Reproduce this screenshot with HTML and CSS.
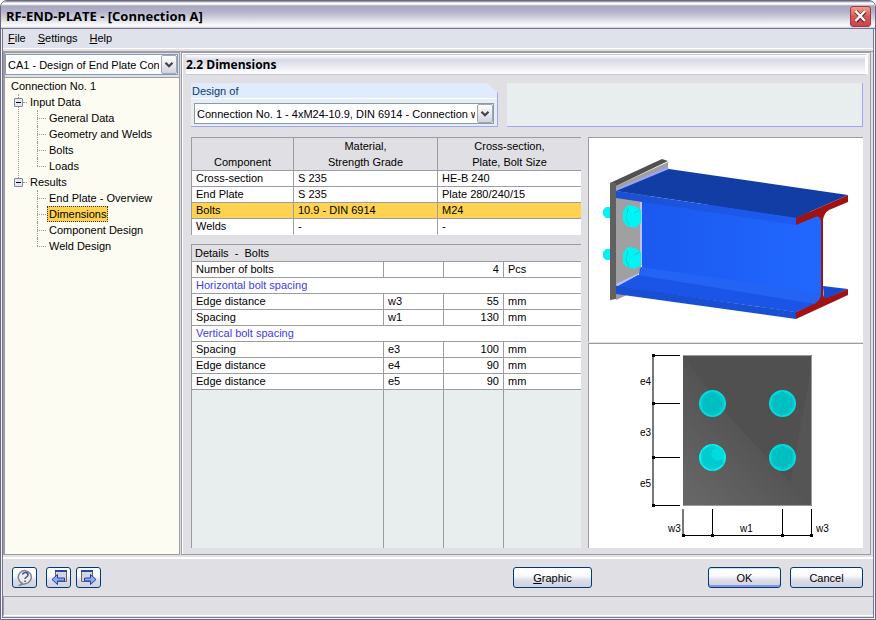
FILE: index.html
```html
<!DOCTYPE html>
<html lang="en">
<head>
<meta charset="utf-8">
<title>RF-END-PLATE - [Connection A]</title>
<link rel="stylesheet" href="styles.css">
</head>
<body>
<div class="window">
  <header class="titlebar">
    <h1>RF-END-PLATE - [Connection A]</h1>
    <button class="close" aria-label="Close" type="button">
      <svg viewBox="0 0 21 21" width="21" height="21" aria-hidden="true"><path d="M6 5.500L15 15.500M15 5.500L6 15.500" stroke="#6e1a24" stroke-width="4"/><path d="M5.500 5L15 15M15 5L5.500 15" stroke="#fff" stroke-width="2.500"/></svg>
    </button>
  </header>
  <nav class="menubar" aria-label="Menu">
    <button type="button"><u>F</u>ile</button>
    <button type="button"><u>S</u>ettings</button>
    <button type="button"><u>H</u>elp</button>
  </nav>
  <div class="workspace">
    <aside class="sidebar">
      <div class="case">
        <select class="combo" aria-label="Design case"><option>CA1 - Design of End Plate Connection</option></select>
        <svg class="arrow" viewBox="0 0 16 18" aria-hidden="true"><use href="#chevron"/></svg>
      </div>
      <div class="tree">
        <div class="root">Connection No. 1</div>
        <ul class="groups">
          <li class="group"><div class="branch"><button type="button" class="toggle" aria-label="Collapse Input Data"></button>Input Data</div>
            <ul class="leaves"><li><a href="#general">General Data</a></li><li><a href="#geometry">Geometry and Welds</a></li><li><a href="#bolts">Bolts</a></li><li><a href="#loads">Loads</a></li></ul>
          </li>
          <li class="group"><div class="branch"><button type="button" class="toggle" aria-label="Collapse Results"></button>Results</div>
            <ul class="leaves"><li><a href="#overview">End Plate - Overview</a></li><li><a class="current" href="#dimensions">Dimensions</a></li><li><a href="#component">Component Design</a></li><li><a href="#weld">Weld Design</a></li></ul>
          </li>
        </ul>
      </div>
    </aside>
    <main class="content">
      <h2>2.2 Dimensions</h2>
      <div class="panels">
        <section class="design">
          <label for="design">Design of</label>
          <div class="design-field">
            <select id="design" class="combo"><option>Connection No. 1 - 4xM24-10.9, DIN 6914 - Connection with end plate</option></select>
            <svg class="arrow" viewBox="0 0 16 18" aria-hidden="true"><use href="#chevron"/></svg>
          </div>
        </section>
        <div class="blank"></div>
      </div>
      <div class="columns">
        <div class="tables">
          <table class="components">
            <colgroup><col class="c-name"><col class="c-material"><col></colgroup>
            <thead><tr><th>Component</th><th>Material,<br>Strength Grade</th><th>Cross-section,<br>Plate, Bolt Size</th></tr></thead>
            <tbody>
              <tr><td>Cross-section</td><td>S 235</td><td>HE-B 240</td></tr>
              <tr><td>End Plate</td><td>S 235</td><td>Plate 280/240/15</td></tr>
              <tr class="selected"><td>Bolts</td><td>10.9 - DIN 6914</td><td>M24</td></tr>
              <tr><td>Welds</td><td>-</td><td>-</td></tr>
            </tbody>
          </table>
          <div class="details-box">
            <table class="details">
              <colgroup><col><col class="d-symbol"><col class="d-value"><col class="d-unit"></colgroup>
              <thead><tr><th colspan="4">Details&nbsp; -&nbsp; Bolts</th></tr></thead>
              <tbody>
                <tr><td>Number of bolts</td><td></td><td class="num">4</td><td>Pcs</td></tr>
                <tr class="heading"><td colspan="4">Horizontal bolt spacing</td></tr>
                <tr><td>Edge distance</td><td>w3</td><td class="num">55</td><td>mm</td></tr>
                <tr><td>Spacing</td><td>w1</td><td class="num">130</td><td>mm</td></tr>
                <tr class="heading"><td colspan="4">Vertical bolt spacing</td></tr>
                <tr><td>Spacing</td><td>e3</td><td class="num">100</td><td>mm</td></tr>
                <tr><td>Edge distance</td><td>e4</td><td class="num">90</td><td>mm</td></tr>
                <tr><td>Edge distance</td><td>e5</td><td class="num">90</td><td>mm</td></tr>
              </tbody>
            </table>
            <div class="filler"><i></i><i></i><i></i><i></i></div>
          </div>
        </div>
        <div class="views">
          <figure class="view">
            <svg viewBox="589 138 274 204" role="img" aria-label="Beam with bolted end plate">
              <defs>
                <linearGradient id="web" x1="0" x2="1"><stop offset="0" stop-color="#1b58ef"/><stop offset="1" stop-color="#2168ff"/></linearGradient>
                <linearGradient id="flange" x1="0" x2="1"><stop offset="0" stop-color="#1b4fd2"/><stop offset="1" stop-color="#1d5cf2"/></linearGradient>
              </defs>
              <path d="M616 186L668 162V180L641 204V268L637 277L616 287Z" fill="#a0a0a0"/>
              <path d="M616 292L629 294L616 300Z" fill="#999"/>
              <path d="M610 183L662 159L668 161L616 186Z" fill="#505050"/>
              <path d="M616 189L667 167L670 170L617 193Z" fill="#98a4f4"/>
              <path d="M616 284L637 274L640 276L618 287Z" fill="#bbc1ff"/>
              <path d="M642 200L822 213V298L796 312L637 286L640 268H642Z" fill="url(#web)"/>
              <path d="M640 202H642V265H640Z" fill="#bbc1ff"/>
              <path d="M641 267L822 293L821 302L807 306L638 279Z" fill="#2464f5"/>
              <path d="M638 275L816 304L796 312L616 287Z" fill="#1b55e8"/>
              <path d="M616 286L796 312V319L616 294Z" fill="#194fd2"/>
              <path d="M823 286L848 289L824 300Z" fill="#174bcf"/>
              <path d="M616 191L669 169L848 195L796 218Z" fill="#123da5"/>
              <path d="M616 191L796 218V225L616 198Z" fill="url(#flange)"/>
              <path d="M796 218L848 195V202L829 210Q824 213 823 220V292Q823 299 827 298L848 289V295L796 319V312L814 304Q820 301 821 295V223Q821 215 815 217L796 225Z" fill="#a01313"/>
              <path d="M610 183H616V299L610 300Z" fill="#606060"/>
              <path d="M603 210L606 207H610V218H606L603 215ZM603 252L606 249H610V260H606L603 257ZM623 211L628 205L635 206L641 210V223L635 228L627 226L623 221ZM623 253L628 247L635 248L641 252V265L635 269L627 267L623 263Z" fill="#00f4f4"/>
              <path d="M628 209L626 218L629 225M628 251L626 260L629 267M634 213L640 210M634 255L640 252" fill="none" stroke="#00d2d5"/>
            </svg>
          </figure>
          <figure class="view">
            <svg viewBox="589 344 274 204" role="img" aria-label="End plate dimensions">
              <defs><linearGradient id="plate" x1=".6" y1=".5" x2=".15" y2="1"><stop offset="0" stop-color="#525252"/><stop offset="1" stop-color="#666"/></linearGradient></defs>
              <path d="M683 355H812V506H683Z" fill="url(#plate)"/>
              <path d="M683 355H812V506L726 413Z" fill="#505050"/>
              <path d="M812 365V506L790 484Z" fill="#555"/>
              <path d="M683 355.500H811.500V505.500H683" fill="none" stroke="#999"/>
              <g fill="#00bfc2" stroke="#00dfe0" stroke-width="2"><circle cx="712.500" cy="403.500" r="12.500"/><circle cx="782.500" cy="403.500" r="12.500"/><circle cx="712.500" cy="457.500" r="12.500" fill="#00ccd0" stroke="#00f6f6"/><circle cx="782.500" cy="457.500" r="12.500"/></g>
              <path id="hex" d="M712 391L723 397V410L712 416L702 410V397Z" fill="none" stroke="#00cfd2"/>
              <use href="#hex" x="70"/><use href="#hex" y="54"/><use href="#hex" x="70" y="54"/>
              <path d="M712 450L718 446L724 452V459L717 461L712 457Z" fill="#00dde0"/>
              <path d="M653 355V506M683 509V535" stroke="#777" stroke-width="2" fill="none"/>
              <path d="M652 355.500H680M652 403.500H680M652 457.500H680M652 505.500H680M712.500 509V536M782.500 509V536M811.500 509V536M683 535.500H812" stroke="#000" fill="none"/>
              <path d="M652 354h3v3h-3zM652 402h3v3h-3zM652 456h3v3h-3zM652 504h3v3h-3zM682 534h3v3h-3zM711 534h3v3h-3zM781 534h3v3h-3zM810 534h3v3h-3z"/>
              <g class="dim"><text x="640" y="385">e4</text><text x="640" y="436">e3</text><text x="640" y="487">e5</text><text x="668" y="532">w3</text><text x="740" y="532">w1</text><text x="816" y="532">w3</text></g>
            </svg>
          </figure>
        </div>
      </div>
    </main>
  </div>
  <footer class="actions">
    <button type="button" class="btn icon help" aria-label="Help"><svg viewBox="0 0 20 17" width="20" height="17" aria-hidden="true"><path d="M7 14L5 16L11 14.500A6.500 6.500 0 1 0 7 14Z" fill="#ececf0" stroke="#85868e" stroke-width="1.500"/><path d="M7.500 5.500Q8 3.500 10.500 3.500T13 6Q13 7 11.500 8T10 10M10 11.500V13" fill="none" stroke="#3a5080" stroke-width="1.500"/></svg></button>
    <button type="button" class="btn icon" aria-label="Previous"><svg viewBox="0 0 20 17" width="20" height="17" aria-hidden="true"><path d="M6.500 1.500H17.500V12.500H6.500Z" fill="#d5d5dd" stroke="#666"/><path d="M6 1H18V3H6Z" fill="#2845b5"/><path d="M3 10.500L8.500 5.500V9H15.500V12H8.500V15.500Z" fill="#8fa7f5" stroke="#213fae"/></svg></button>
    <button type="button" class="btn icon" aria-label="Next"><svg viewBox="0 0 20 17" width="20" height="17" aria-hidden="true"><path d="M2.500 1.500H13.500V12.500H2.500Z" fill="#d5d5dd" stroke="#666"/><path d="M2 1H14V3H2Z" fill="#2845b5"/><path d="M17 10.500L11.500 5.500V9H5.500V12H11.500V15.500Z" fill="#8fa7f5" stroke="#213fae"/></svg></button>
    <button type="button" class="btn graphic"><u>G</u>raphic</button>
    <button type="button" class="btn ok">OK</button>
    <button type="button" class="btn">Cancel</button>
  </footer>
  <div class="status"></div>
</div>
<svg class="symbols" aria-hidden="true"><symbol id="chevron" viewBox="0 0 16 18"><path d="M4 7L8 11L12 7" fill="none" stroke="#444" stroke-width="2.500"/></symbol></svg>
</body>
</html>
```
FILE: styles.css
```css
* { box-sizing: border-box; }
body {
  margin: 0;
  background: #fff;
  color: #000;
  font: 11px/16px "Liberation Sans", Arial, sans-serif;
}
button, select { font: inherit; color: inherit; }
ul { list-style: none; margin: 0; padding: 0; }
a { color: inherit; text-decoration: none; }
.symbols { display: none; }

.window {
  height: 100vh;
  display: flex;
  flex-direction: column;
  background: #e0dfe3;
  border: 1px solid #686680;
  border-radius: 7px 7px 0 0;
  box-shadow: inset 0 0 0 1px #f4f4f8, inset 0 0 0 2px #77758f;
  padding: 0 2px 3px;
  overflow: hidden;
}
.titlebar {
  display: flex;
  align-items: center;
  height: 28px;
  margin: 0 -2px;
  padding: 3px 4px 0 5px;
  border-bottom: 1px solid #77758f;
  background: linear-gradient(#77758f 0, #fff 2px, #fff 3px, #a6a5bf 5px, #b5b4ca 11px, #d2d2df 17px, #fff 25px, #c8c8d4 27px);
}
.titlebar h1 {
  flex: 1;
  margin: 0;
  font: bold 13px/20px "Open Sans", sans-serif;
}
.close {
  width: 21px;
  height: 21px;
  padding: 0;
  border: 1px solid #a3364a;
  border-radius: 3px;
  background: linear-gradient(#eda08f, #d75a52 50%, #c9444c);
}
.close svg { display: block; margin: -1px; }
.menubar {
  display: flex;
  gap: 12px;
  height: 20px;
  padding: 1px 5px 3px;
  background: #dfe2eb;
  border-bottom: 1px solid #fff;
}
.menubar button { border: 0; padding: 0; background: none; }

.workspace {
  flex: 1;
  min-height: 0;
  display: flex;
  gap: 1px;
  margin-top: 2px;
  padding-right: 2px;
  border-top: 1px solid #9d9ca4;
  border-bottom: 2px solid #fff;
}
.sidebar {
  width: 177px;
  display: flex;
  flex-direction: column;
  border: 1px solid #9d9ca4;
  border-width: 1px 1px 1px 2px;
  margin-bottom: 2px;
  background: #fcfcf3;
}
.case { position: relative; background: #e0dfe3; padding: 1px 1px 2px 0; border-bottom: 1px solid #9d9ca4; }
.combo {
  appearance: none;
  display: block;
  width: 100%;
  height: 21px;
  padding: 0 18px 0 2px;
  border: 1px solid #7f9db9;
  border-radius: 0;
  background: #fff;
  text-overflow: clip;
}
.arrow {
  position: absolute;
  right: 2px;
  top: 2px;
  width: 16px;
  height: 19px;
  border: 1px solid #a6a5b5;
  border-radius: 2px;
  background: linear-gradient(#fff, #d3d3df);
  pointer-events: none;
}
.tree { padding-left: 6px; }
.groups { padding-left: 1px; }
.group { position: relative; }
.group:first-child::before {
  content: "";
  position: absolute;
  left: 6px;
  top: 0;
  height: 88px;
  border-left: 1px dotted #9a9a9a;
}
.branch { display: flex; align-items: center; }
.toggle {
  position: relative;
  width: 9px;
  height: 9px;
  margin: 0 7px 0 2px;
  padding: 0;
  border: 1px solid #7b8b9c;
  border-radius: 1px;
  background: linear-gradient(#000, #000) center / 5px 1px no-repeat, #e7e7ec;
}
.toggle::after { content: ""; position: absolute; left: 8px; top: 3px; width: 4px; border-top: 1px dotted #9a9a9a; }
.leaves { margin-left: 25px; }
.leaves li { position: relative; padding-left: 10px; height: 16px; }
.leaves li::before, .leaves li::after { content: ""; position: absolute; left: 0; top: 0; }
.leaves li::before { height: 16px; border-left: 1px dotted #9a9a9a; }
.leaves li:last-child::before { height: 8px; }
.leaves li::after { top: 8px; width: 9px; border-top: 1px dotted #9a9a9a; }
.leaves a { display: inline-block; padding: 0 2px; }
.current { background: #ffd34f; outline: 1px dotted #333; outline-offset: -1px; }

.content {
  flex: 1;
  min-width: 0;
  display: flex;
  flex-direction: column;
  border: 1px solid #9d9ca4;
  box-shadow: inset 1px 1px #fff;
  padding: 1px 2px 6px;
  margin-bottom: 2px;
}
.content h2 {
  margin: 0 0 8px 2px;
  height: 21px;
  font: bold 12px/19px "Open Sans", sans-serif;
  border: 1px solid #c5c5d8;
  border-width: 1px 3px 1px 0;
  border-right-color: #fff;
  background: linear-gradient(#fff, #d8d8e5 5px, #fff);
}
.panels { display: flex; gap: 9px; padding: 0 5px 0 7px; }
.design { width: 307px; background: #e8eeed; border: 1px solid #a5a3f3; border-width: 0 1px 1px 0; clip-path: polygon(0 0, 296px 0, 100% 10px, 100% 100%, 0 100%); }
.design label { display: block; height: 16px; padding-left: 1px; background: #e0ebfd; color: #063d78; border-bottom: 1px solid #fff; }
.design-field { position: relative; padding: 4px 3px 2px; }
.design-field .arrow { right: 4px; top: 5px; }
.blank { flex: 1; background: #e8eeed; border: 1px solid #a5a3f3; border-width: 0 1px 1px 0; }

.columns { flex: 1; min-height: 0; display: flex; gap: 7px; padding: 10px 5px 0 7px; }
.tables { width: 390px; display: flex; flex-direction: column; gap: 9px; }
table { width: 100%; border-collapse: separate; border-spacing: 0; table-layout: fixed; border: 1px solid #9d9ca4; border-width: 1px 0 0 1px; }
th { font-weight: normal; border-bottom: 1px solid #9d9ca4; padding: 0; vertical-align: bottom; }
td { height: 16px; line-height: 15px; padding: 0 4px; background: #fff; border-bottom: 1px solid #9d9ca4; }
.components tr > * + * { border-left: 1px solid #9d9ca4; }
.components tr:last-child td { border-bottom-color: #fff; }
.c-name { width: 101px; }
.c-material { width: 144px; }
.selected td { background: #ffd34f; }
.details-box { flex: 1; min-height: 0; display: flex; flex-direction: column; background: #e8eeed; }
.details th { height: 17px; line-height: 16px; padding-left: 3px; text-align: left; background: #e0dfe3; }
.details td + td { border-left: 1px solid #9d9ca4; }
.heading td { color: #3c3cf0; }
.d-symbol, .d-value { width: 60px; }
.d-unit { width: 78px; }
td.num { text-align: right; padding-right: 4px; }
.filler { flex: 1; display: grid; grid-template-columns: 1fr 60px 60px 78px; border-left: 1px solid #9d9ca4; }
.filler i + i { border-left: 1px solid #9d9ca4; }
.views { flex: 1; min-width: 0; display: flex; flex-direction: column; gap: 1px; }
.view { flex: 1; min-height: 0; margin: 0; background: #fff; border: 1px solid #9d9ca4; border-width: 1px 0 0 1px; }
.view svg { display: block; width: 100%; height: 100%; }
.dim { font: 10px "Liberation Sans", Arial, sans-serif; }

.actions { display: flex; align-items: center; height: 37px; padding: 0 10px 0 9px; }
.btn {
  width: 73px;
  height: 21px;
  padding: 0;
  border: 1px solid #003c74;
  border-radius: 3px;
  background: linear-gradient(#fff, #fafaff 40%, #dcdce7 65%, #d2d2df);
}
.btn svg { display: block; margin: auto; }
.icon { width: 25px; margin-right: 5px; }
.help { margin-right: 9px; }
.graphic { width: 79px; margin: 0 116px 0 auto; }
.ok { margin-right: 9px; box-shadow: inset 0 1px #cedcff, inset 0 -2px #8796e8; }
.status { height: 20px; border: 1px solid #9d9ca4; border-width: 1px 0 0 1px; border-bottom: 1px solid #fff; }
```
